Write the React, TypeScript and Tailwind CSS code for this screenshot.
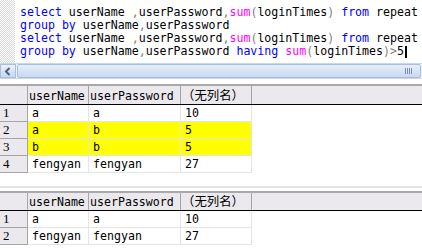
import React from 'react';

const mono = "font-['DejaVu_Sans_Mono','Noto_Sans_CJK_SC',monospace]";

type Tok = { t: string; c?: 'kw' | 'fn' | 'op' };

const lines: Tok[][] = [
  [
    { t: 'select', c: 'kw' }, { t: ' userName ' }, { t: ',', c: 'op' }, { t: 'userPassword' }, { t: ',', c: 'op' },
    { t: 'sum', c: 'fn' }, { t: '(', c: 'op' }, { t: 'loginTimes' }, { t: ')', c: 'op' }, { t: ' ' },
    { t: 'from', c: 'kw' }, { t: ' repeat' },
  ],
  [{ t: 'group by', c: 'kw' }, { t: ' userName' }, { t: ',', c: 'op' }, { t: 'userPassword' }],
  [
    { t: 'select', c: 'kw' }, { t: ' userName ' }, { t: ',', c: 'op' }, { t: 'userPassword' }, { t: ',', c: 'op' },
    { t: 'sum', c: 'fn' }, { t: '(', c: 'op' }, { t: 'loginTimes' }, { t: ')', c: 'op' }, { t: ' ' },
    { t: 'from', c: 'kw' }, { t: ' repeat' },
  ],
  [
    { t: 'group by', c: 'kw' }, { t: ' userName' }, { t: ',', c: 'op' }, { t: 'userPassword ' },
    { t: 'having', c: 'kw' }, { t: ' ' }, { t: 'sum', c: 'fn' }, { t: '(', c: 'op' }, { t: 'loginTimes' },
    { t: ')', c: 'op' }, { t: '>', c: 'op' }, { t: '5' },
  ],
];

const tokColor = (c?: string) =>
  c === 'kw' ? 'text-[#0000ff]' : c === 'fn' ? 'text-[#ff00ff]' : c === 'op' ? 'text-[#808080]' : 'text-black';

function Editor() {
  return (
    <div className="flex h-[63px] bg-white">
      <div className="w-[15px] bg-[repeating-conic-gradient(#d8d8d8_0_25%,#ffffff_0_50%)] bg-[length:2px_2px]" />
      <div className={`pl-[5px] pt-[6px] text-[11.6px] leading-[13px] ${mono} whitespace-pre`}>
        {lines.map((l, i) => (
          <div key={i} className="flex items-center">
            {l.map((tk, j) => (
              <span key={j} className={tokColor(tk.c)}>{tk.t}</span>
            ))}
            {i === 3 && <span className="ml-[1px] inline-block h-[12px] w-[2px] bg-black" />}
          </div>
        ))}
      </div>
    </div>
  );
}

function ScrollBar() {
  return (
    <div className="flex h-[16px] border-y border-[#c9d6e8] bg-[#eef3fb]">
      <div className="flex w-[16px] items-center justify-center border border-[#a9bedc] bg-gradient-to-b from-[#eaf1fb] to-[#c8d8ef]">
        <svg width="8" height="9" viewBox="0 0 8 9">
          <path d="M5.5 1 L2 4.5 L5.5 8" fill="none" stroke="#4d6185" strokeWidth="2" />
        </svg>
      </div>
      <div className="ml-[1px] mr-[1px] flex flex-1 items-center justify-end rounded-[2px] border border-[#a9bedc] bg-gradient-to-b from-[#e6eefa] to-[#c9d9f0] pr-[8px]">
        <div className="flex gap-[1px]">
          {[0, 1, 2, 3].map((k) => (
            <div key={k} className="h-[6px] w-[1px] bg-[#7d8fb0]" />
          ))}
        </div>
      </div>
    </div>
  );
}

type Row = { n: number; cells: string[]; hl?: boolean };

function Grid({ rows, head }: { rows: Row[]; head: string }) {
  const widths = ['w-[61px]', 'w-[92px]', 'w-[71px]'];
  const headers = ['userName', 'userPassword'];
  return (
    <div className={`${mono} text-[11.6px]`}>
      <div className={`flex ${head} border-b border-black bg-[#ebe9ed]`}>
        <div className="w-[28px] border-r border-[#a6a6a6]" />
        {headers.map((h, i) => (
          <div key={h} className={`${widths[i]} flex items-end border-r border-[#a6a6a6] pb-[1px] pl-[1px] leading-[14px]`}>
            {h}
          </div>
        ))}
        <div className="flex w-[71px] items-end border-r border-[#a6a6a6] pb-[1px] pl-[1px] text-[12.4px] leading-[14px]">
          （无列名）
        </div>
        <div className="flex-1" />
      </div>
      {rows.map((r) => (
        <div key={r.n} className="flex h-[17px]">
          <div className="flex w-[28px] items-center border-b border-r border-[#a6a6a6] bg-[#ebe9ed] pl-[3px] font-['Liberation_Serif',serif] text-[13px]">
            {r.n}
          </div>
          {r.cells.map((c, i) => (
            <div
              key={i}
              className={`${widths[i]} flex items-end border-b border-r border-[#e4e4e4] pb-[1px] pl-[4px] leading-[14px] ${r.hl ? 'bg-[#ffff00]' : 'bg-white'}`}
            >
              {c}
            </div>
          ))}
          <div className="flex-1" />
        </div>
      ))}
    </div>
  );
}

export default function App() {
  return (
    <div className="h-[250px] w-[422px] overflow-hidden bg-white">
      <Editor />
      <ScrollBar />
      <div className="mt-[5px] h-[2px] bg-[#a9a9a9]" />
      <Grid
        head="h-[19px]"
        rows={[
          { n: 1, cells: ['a', 'a', '10'] },
          { n: 2, cells: ['a', 'b', '5'], hl: true },
          { n: 3, cells: ['b', 'b', '5'], hl: true },
          { n: 4, cells: ['fengyan', 'fengyan', '27'] },
        ]}
      />
      <div className="mt-[13px] h-[2px] bg-[#e2e2e2]" />
      <div className="mt-[3px] h-[2px] bg-[#a9a9a9]" />
      <Grid
        head="h-[18px]"
        rows={[
          { n: 1, cells: ['a', 'a', '10'] },
          { n: 2, cells: ['fengyan', 'fengyan', '27'] },
        ]}
      />
    </div>
  );
}
